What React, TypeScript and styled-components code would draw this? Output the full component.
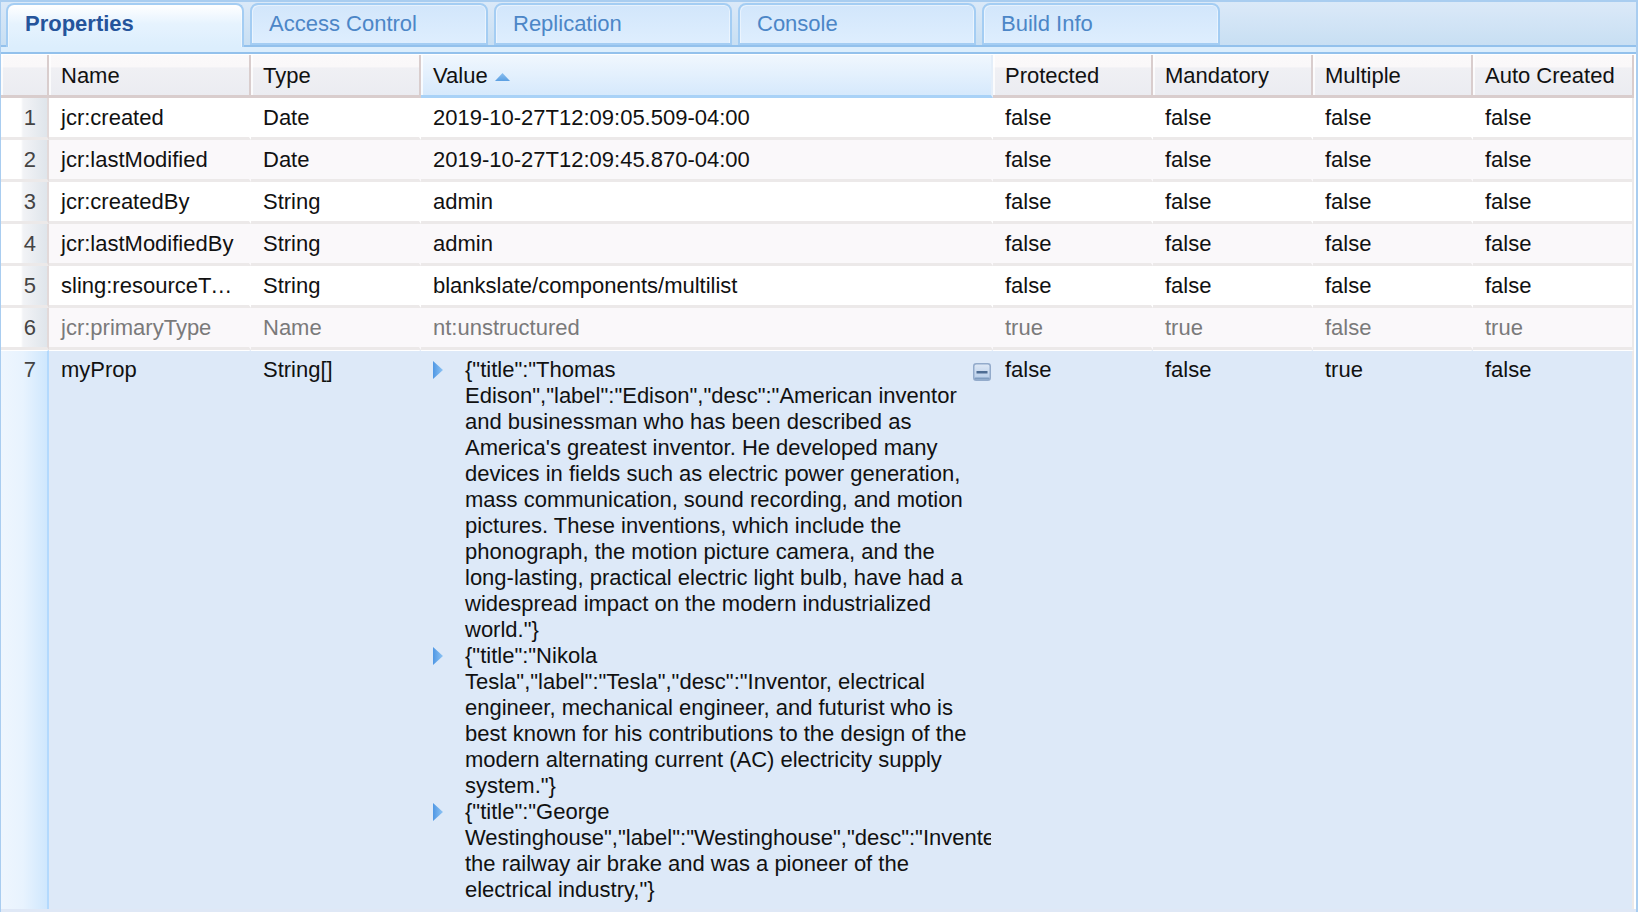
import React from "react";
import styled, { createGlobalStyle } from "styled-components";

const Global = createGlobalStyle`
  html, body { margin: 0; padding: 0; background: #dfe8f6; overflow: hidden; }
  body { font-family: "Liberation Sans", Arial, sans-serif; font-size: 22px; color: #111; }
`;

const Page = styled.div`
  width: 1638px;
  height: 912px;
  overflow: hidden;
  box-sizing: border-box;
  display: flex;
  flex-direction: column;
  border-left: 1px solid #a9cdf0;
  border-right: 2px solid #a9cdf0;
  background: #ffffff;
`;

const TabBar = styled.div`
  box-sizing: border-box;
  flex: none;
  height: 47px;
  padding: 1px 0 0 5px;
  display: flex;
  gap: 6px;
  align-items: flex-start;
  border-top: 2px solid #a9cdf0;
  border-bottom: 2px solid #93c1ec;
  background: linear-gradient(180deg, #dbe9f8 0%, #c8dff3 100%);
`;

const Tab = styled.div<{ $active?: boolean }>`
  box-sizing: border-box;
  width: 238px;
  height: ${(p) => (p.$active ? "44px" : "42px")};
  padding: 6px 0 0 17px;
  line-height: 26px;
  font-size: 22px;
  font-weight: ${(p) => (p.$active ? 700 : 400)};
  color: ${(p) => (p.$active ? "#25549b" : "#4c86c7")};
  border: 2px solid #a4cdf3;
  border-bottom-width: ${(p) => (p.$active ? 0 : 2)}px;
  border-radius: 8px 8px 0 0;
  box-shadow: inset 1px 1px 0 rgba(255, 255, 255, 0.45), inset -1px 0 0 rgba(255, 255, 255, 0.45);
  background: ${(p) =>
    p.$active
      ? "linear-gradient(180deg, #ffffff 0%, #e6f3fe 45%, #dceefd 100%)"
      : "linear-gradient(180deg, #d2e6fb 0%, #deeefe 100%)"};
  position: relative;
  z-index: 1;
`;

const Strip = styled.div`
  flex: none;
  height: 5px;
  background: #dceefd;
  border-bottom: 2px solid #93c1ec;
`;

const Table = styled.table`
  flex: none;
  margin-top: 1px;
  width: 1633px;
  table-layout: fixed;
  border-collapse: separate;
  border-spacing: 0;
  background: #fff;
`;

const Footer = styled.div`
  flex: 1;
  background: #dfe8f6;
`;

const HeadCell = styled.th<{ $sorted?: boolean }>`
  box-sizing: border-box;
  height: 43px;
  padding: 1px 0 0 12px;
  text-align: left;
  font-weight: 400;
  font-size: 22px;
  line-height: 26px;
  color: #111;
  white-space: nowrap;
  border-right: 2px solid ${(p) => (p.$sorted ? "#e4eef9" : "#d9cdcd")};
  border-bottom: 3px solid ${(p) => (p.$sorted ? "#a9d2f7" : "#d9cdcd")};
  box-shadow: inset 2px 0 0 rgba(255, 255, 255, 0.75);
  background: ${(p) =>
    p.$sorted
      ? "linear-gradient(180deg, #f0f7fe 0%, #d6e9fc 100%)"
      : "linear-gradient(180deg, #fbf9fa 0%, #faf8f9 30%, #f0f0f4 32%, #ebecf1 100%)"};
`;

const SortMark = styled.svg`
  margin-left: 7px;
  vertical-align: 2px;
`;

const Row = styled.tr<{ $even?: boolean; $selected?: boolean; $readonly?: boolean }>`
  background: ${(p) => (p.$selected ? "#dde9f8" : p.$even ? "#faf8fa" : "#ffffff")};
  color: ${(p) => (p.$readonly ? "#7a7a7a" : "#111")};
`;

const Cell = styled.td<{ $selected?: boolean }>`
  box-sizing: border-box;
  height: ${(p) => (p.$selected ? "559px" : "42px")};
  padding: ${(p) => (p.$selected ? "6px" : "7px")} 12px 0 12px;
  vertical-align: top;
  line-height: 26px;
  font-size: 22px;
  white-space: nowrap;
  overflow: hidden;
  text-overflow: ellipsis;
  border-right: 2px solid transparent;
  border-top: ${(p) => (p.$selected ? "1px solid #ffffff" : 0)};
  border-bottom: ${(p) => (p.$selected ? 0 : "3px solid #ece9e9")};
  &:last-child {
    border-right-color: #ece9e9;
  }
`;

const NumCell = styled.td<{ $selected?: boolean }>`
  box-sizing: border-box;
  height: ${(p) => (p.$selected ? "559px" : "42px")};
  padding: ${(p) => (p.$selected ? "6px" : "7px")} 11px 0 0;
  vertical-align: top;
  text-align: right;
  line-height: 26px;
  font-size: 22px;
  color: #444;
  border-right: 2px solid ${(p) => (p.$selected ? "#b3d9fd" : "#e2d9d9")};
  border-top: ${(p) => (p.$selected ? "1px solid #ffffff" : 0)};
  border-bottom: ${(p) => (p.$selected ? 0 : "3px solid #ece9e9")};
  background: ${(p) =>
    p.$selected
      ? "linear-gradient(90deg, #eef6fe 0, #e8f3fe 22px, #cfe7fd 46px)"
      : "linear-gradient(90deg, #ffffff 0, #ffffff 20px, #f2f3f6 22px, #dfe5eb 46px)"};
`;

const ValueCell = styled(Cell)`
  position: relative;
  white-space: normal;
  text-overflow: clip;
  padding-right: 0;
`;

const ValueItem = styled.div`
  display: grid;
  grid-template-columns: 32px 502px;
  white-space: normal;
`;

const Arrow = styled.svg`
  margin-top: 4px;
  display: block;
`;

const CollapseIcon = styled.svg`
  position: absolute;
  top: 12px;
  right: 0;
`;

const ROWS = [
  ["jcr:created", "Date", "2019-10-27T12:09:05.509-04:00", "false", "false", "false", "false"],
  ["jcr:lastModified", "Date", "2019-10-27T12:09:45.870-04:00", "false", "false", "false", "false"],
  ["jcr:createdBy", "String", "admin", "false", "false", "false", "false"],
  ["jcr:lastModifiedBy", "String", "admin", "false", "false", "false", "false"],
  ["sling:resourceType", "String", "blankslate/components/multilist", "false", "false", "false", "false"],
  ["jcr:primaryType", "Name", "nt:unstructured", "true", "true", "false", "true"],
];

const VALUES = [
  `{"title":"Thomas Edison","label":"Edison","desc":"American inventor and businessman who has been described as America's greatest inventor. He developed many devices in fields such as electric power generation, mass communication, sound recording, and motion pictures. These inventions, which include the phonograph, the motion picture camera, and the long-lasting, practical electric light bulb, have had a widespread impact on the modern industrialized world."}`,
  `{"title":"Nikola Tesla","label":"Tesla","desc":"Inventor, electrical engineer, mechanical engineer, and futurist who is best known for his contributions to the design of the modern alternating current (AC) electricity supply system."}`,
  `{"title":"George Westinghouse","label":"Westinghouse","desc":"Invented the railway air brake and was a pioneer of the electrical industry,"}`,
];

const TABS = ["Properties", "Access Control", "Replication", "Console", "Build Info"];
const HEADS = ["Name", "Type", "Value", "Protected", "Mandatory", "Multiple", "Auto Created"];
const WIDTHS = [48, 202, 170, 572, 160, 160, 160, 161];

export default function App() {
  return (
    <Page>
      <Global />
      <TabBar>
        {TABS.map((t, i) => (
          <Tab key={t} $active={i === 0}>{t}</Tab>
        ))}
      </TabBar>
      <Strip />
      <Table>
        <colgroup>
          {WIDTHS.map((w, i) => (
            <col key={i} width={w} />
          ))}
        </colgroup>
        <thead>
          <tr>
            <HeadCell />
            {HEADS.map((h) => (
              <HeadCell key={h} $sorted={h === "Value"}>
                {h}
                {h === "Value" && (
                  <SortMark width="15" height="8" viewBox="0 0 15 8">
                    <defs>
                      <linearGradient id="sortFill" x1="0" y1="0" x2="0" y2="1">
                        <stop offset="0" stopColor="#8cc0f0" />
                        <stop offset="1" stopColor="#5b9fe2" />
                      </linearGradient>
                    </defs>
                    <path d="M7.5 0 L15 8 L0 8 Z" fill="url(#sortFill)" />
                  </SortMark>
                )}
              </HeadCell>
            ))}
          </tr>
        </thead>
        <tbody>
          {ROWS.map((r, i) => (
            <Row key={r[0]} $even={i % 2 === 1} $readonly={i === 5}>
              <NumCell>{i + 1}</NumCell>
              {r.map((c, j) => (
                <Cell key={j}>{c}</Cell>
              ))}
            </Row>
          ))}
          <Row $selected>
            <NumCell $selected>7</NumCell>
            <Cell $selected>myProp</Cell>
            <Cell $selected>String[]</Cell>
            <ValueCell $selected>
              {VALUES.map((v, i) => (
                <ValueItem key={i}>
                  <Arrow width="10" height="18" viewBox="0 0 10 18">
                    <defs>
                      <linearGradient id={`arrowFill${i}`} x1="0" y1="0" x2="1" y2="0">
                        <stop offset="0" stopColor="#4f97e4" />
                        <stop offset="1" stopColor="#8ec4f4" />
                      </linearGradient>
                    </defs>
                    <path d="M0 0 L10 9 L0 18 Z" fill={`url(#arrowFill${i})`} />
                  </Arrow>
                  <span>{v}</span>
                </ValueItem>
              ))}
              <CollapseIcon width="18" height="18" viewBox="0 0 18 18">
                <defs>
                  <linearGradient id="collapseFill" x1="0" y1="0" x2="0" y2="1">
                    <stop offset="0" stopColor="#dfe9f6" />
                    <stop offset="1" stopColor="#b4cbe8" />
                  </linearGradient>
                </defs>
                <rect x="0.75" y="0.75" width="16.5" height="16.5" rx="2.5" fill="url(#collapseFill)" stroke="#93abcb" strokeWidth="1.5" />
                <rect x="3.5" y="8" width="11" height="2.5" fill="#4d6c93" />
                <rect x="1.5" y="14.5" width="15" height="2" rx="1" fill="#7f9cc0" />
              </CollapseIcon>
            </ValueCell>
            <Cell $selected>false</Cell>
            <Cell $selected>false</Cell>
            <Cell $selected>true</Cell>
            <Cell $selected>false</Cell>
          </Row>
        </tbody>
      </Table>
      <Footer />
    </Page>
  );
}
